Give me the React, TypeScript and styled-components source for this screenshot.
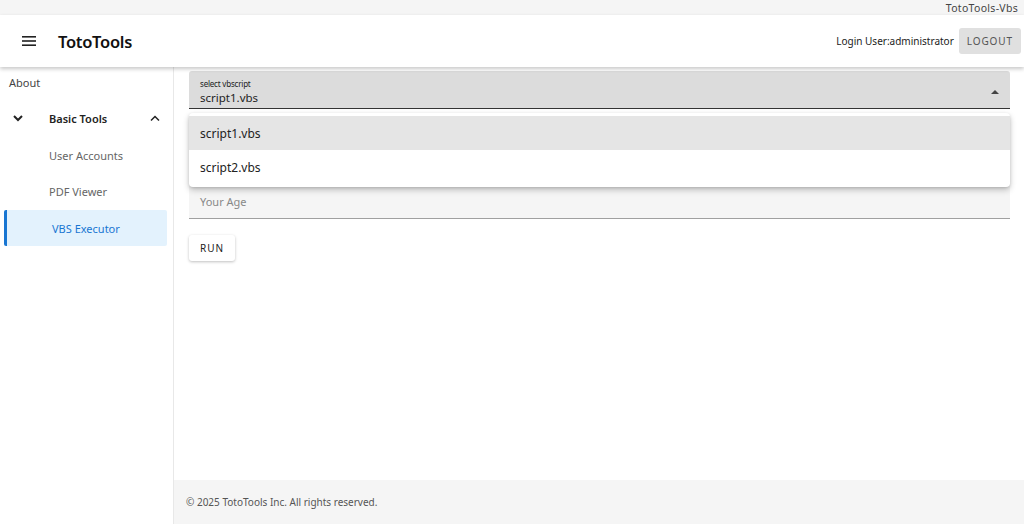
import React from 'react';
import styled, { createGlobalStyle } from 'styled-components';

const GlobalStyle = createGlobalStyle`
	html, body {
		margin: 0;
		padding: 0;
		height: 100%;
	}
	body {
		font-family: "Noto Sans", "Open Sans", sans-serif;
		color: #222;
		background: #fff;
	}
`;

const Page = styled.div`
	display: flex;
	flex-flow: column;
	height: 100vh;
	overflow: hidden;
`;

const TopStrip = styled.div`
	height: 15px;
	background: #f5f5f5;
	display: flex;
	justify-content: flex-end;
	align-items: center;
	padding-right: 6px;
	font-size: 10.5px;
	color: #444;
	letter-spacing: 0.3px;
`;

const Header = styled.header`
	height: 52px;
	display: flex;
	align-items: center;
	padding: 0 3px 0 22px;
	background: #fff;
	box-shadow: 0 2px 4px rgba(0, 0, 0, 0.22);
	position: relative;
	z-index: 2;

	.brand {
		margin-left: 22px;
		font-size: 16.5px;
		font-weight: 600;
		color: #111;
		letter-spacing: -0.3px;
	}
	.spacer {
		flex: 1;
	}
	.user {
		font-size: 10px;
		color: #222;
		margin-right: 5px;
	}
`;

const LogoutButton = styled.button`
	height: 26px;
	padding: 0 8px;
	border: none;
	border-radius: 3px;
	background: #e0e0e0;
	color: #555;
	font-family: inherit;
	font-size: 10px;
	letter-spacing: 0.9px;
`;

const Body = styled.div`
	flex: 1;
	display: flex;
	min-height: 0;
`;

const Sidebar = styled.nav`
	width: 173px;
	flex-shrink: 0;
	border-right: 1px solid #e8e8e8;
	display: flex;
	flex-flow: column;
`;

const NavRow = styled.div<{ $sub?: boolean; $active?: boolean; $group?: boolean }>`
	height: ${p => (p.$group || p.$sub ? '36px' : '30px')};
	display: flex;
	align-items: center;
	font-size: 11px;
	padding-left: ${p => (p.$sub ? (p.$active ? '45px' : '49px') : '9px')};
	color: ${p => (p.$active ? '#1976d2' : p.$sub ? '#666' : '#444')};
	font-weight: ${p => (p.$group ? 600 : 400)};
	margin: ${p => (p.$group ? '3px 0 1px 0' : p.$active ? '1px 6px 0 4px' : '0')};
	background: ${p => (p.$active ? '#e3f2fd' : 'transparent')};
	border-left: ${p => (p.$active ? '3px solid #1976d2' : 'none')};
	border-radius: ${p => (p.$active ? '2px' : '0')};
	${p => (p.$group ? 'color: #222; padding-left: 12px; padding-right: 12px;' : '')}

	.label {
		flex: 1;
		margin-left: 25px;
	}
`;

const Main = styled.div`
	flex: 1;
	display: flex;
	flex-flow: column;
	min-width: 0;
`;

const Content = styled.div`
	flex: 1;
	padding: 4px 14px 0 15px;
`;

const Form = styled.div`
	position: relative;
	display: flex;
	flex-flow: column;
	gap: 21px;
`;

const SelectField = styled.div`
	height: 38px;
	background: #dcdcdc;
	border-radius: 3px 3px 0 0;
	border-bottom: 1.5px solid #333;
	box-sizing: border-box;
	padding: 4px 11px 0 11px;
	display: flex;
	align-items: center;

	.text {
		flex: 1;
		display: flex;
		flex-flow: column;
	}
	.label {
		font-size: 8px;
		color: #222;
		letter-spacing: -0.2px;
	}
	.value {
		font-size: 11.5px;
		color: #222;
		margin-top: 1px;
	}
`;

const TextField = styled.div`
	height: 34px;
	background: #f5f5f5;
	border-radius: 3px 3px 0 0;
	border-bottom: 1px solid #a0a0a0;
	box-sizing: border-box;
	padding: 0 11px;
	display: flex;
	align-items: center;
	font-size: 11px;
	color: #888;
`;

const Menu = styled.ul`
	position: absolute;
	top: 42px;
	left: 0;
	right: 0;
	margin: 0;
	padding: 3px 0;
	list-style: none;
	background: #fff;
	border-radius: 4px;
	box-shadow: 0 3px 6px rgba(0, 0, 0, 0.22), 0 1px 3px rgba(0, 0, 0, 0.12);
	z-index: 3;
`;

const MenuItem = styled.li<{ $selected?: boolean }>`
	height: 34px;
	display: flex;
	align-items: center;
	padding-left: 11px;
	font-size: 12px;
	color: #222;
	background: ${p => (p.$selected ? '#e5e5e5' : '#fff')};
`;

const RunButton = styled.button`
	align-self: flex-start;
	margin-top: -5px;
	height: 26px;
	padding: 0 11px;
	border: none;
	border-radius: 3px;
	background: #fff;
	box-shadow: 0 1px 3px rgba(0, 0, 0, 0.25);
	font-family: inherit;
	font-size: 10px;
	letter-spacing: 1px;
	color: #222;
`;

const Footer = styled.footer`
	height: 44px;
	background: #f5f5f5;
	display: flex;
	align-items: center;
	padding-left: 12px;
	font-size: 10px;
	color: #555;
`;

const Hamburger = () => (
	<svg width="14" height="12" viewBox="0 0 14 12">
		<rect x="0" y="1" width="14" height="1.6" fill="#222" />
		<rect x="0" y="5.2" width="14" height="1.6" fill="#222" />
		<rect x="0" y="9.4" width="14" height="1.6" fill="#222" />
	</svg>
);

const Chevron = ({ up }: { up?: boolean }) => (
	<svg width="12" height="8" viewBox="0 0 12 8">
		<polyline
			points={up ? '2,6.5 6,2.5 10,6.5' : '2,2 6,6 10,2'}
			fill="none"
			stroke="#222"
			strokeWidth={up ? 1.5 : 2}
		/>
	</svg>
);

const DropArrow = () => (
	<svg width="8" height="5" viewBox="0 0 8 5">
		<polygon points="0,5 4,1 8,5" fill="#444" />
	</svg>
);

export default function App() {
	return (
		<Page>
			<GlobalStyle />
			<TopStrip>TotoTools-Vbs</TopStrip>
			<Header>
				<Hamburger />
				<span className="brand">TotoTools</span>
				<span className="spacer" />
				<span className="user">Login User:administrator</span>
				<LogoutButton>LOGOUT</LogoutButton>
			</Header>
			<Body>
				<Sidebar>
					<NavRow>About</NavRow>
					<NavRow $group>
						<Chevron />
						<span className="label">Basic Tools</span>
						<Chevron up />
					</NavRow>
					<NavRow $sub>User Accounts</NavRow>
					<NavRow $sub>PDF Viewer</NavRow>
					<NavRow $sub $active>VBS Executor</NavRow>
				</Sidebar>
				<Main>
					<Content>
						<Form>
							<SelectField>
								<div className="text">
									<span className="label">select vbscript</span>
									<span className="value">script1.vbs</span>
								</div>
								<DropArrow />
							</SelectField>
							<TextField />
							<TextField>Your Age</TextField>
							<RunButton>RUN</RunButton>
							<Menu>
								<MenuItem $selected>script1.vbs</MenuItem>
								<MenuItem>script2.vbs</MenuItem>
							</Menu>
						</Form>
					</Content>
					<Footer>© 2025 TotoTools Inc. All rights reserved.</Footer>
				</Main>
			</Body>
		</Page>
	);
}
